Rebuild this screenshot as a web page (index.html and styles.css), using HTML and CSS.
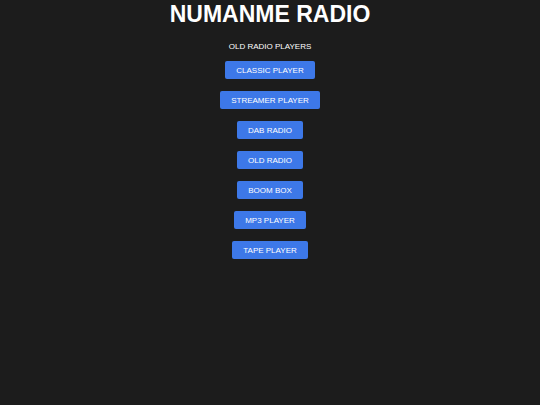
FILE: index.html
```html
<!DOCTYPE html>
<html lang="en">
<head>
  <meta charset="UTF-8">
  <meta name="viewport" content="width=device-width, initial-scale=1.0">
  <title>Numanme Radio</title>
  <link rel="stylesheet" href="styles.css">
</head>
<body>
  <h1 class="title">NUMANME RADIO</h1>
  <p class="subtitle">OLD RADIO PLAYERS</p>
  <div class="players">
    <button class="player">CLASSIC PLAYER</button>
    <button class="player">STREAMER PLAYER</button>
    <button class="player">DAB RADIO</button>
    <button class="player">OLD RADIO</button>
    <button class="player">BOOM BOX</button>
    <button class="player">MP3 PLAYER</button>
    <button class="player">TAPE PLAYER</button>
  </div>
</body>
</html>
```

FILE: styles.css
```css
body {
  font-family: "Liberation Sans", Arial, sans-serif;
  background-color: #1c1c1c;
  color: white;
  margin: 0;
  text-align: center;
}

.title {
  font-size: 23px;
  font-weight: bold;
  margin: 0;
  padding-top: 1px;
  line-height: 26px;
}

.subtitle {
  font-size: 8px;
  margin: 15px 0 0;
  line-height: 10px;
}

.players {
  display: flex;
  flex-direction: column;
  align-items: center;
  gap: 12px;
  margin-top: 9px;
}

.player {
  font-family: "Liberation Sans", Arial, sans-serif;
  background: #3d78e8;
  color: white;
  border: none;
  border-radius: 2px;
  height: 18px;
  padding: 0 11px;
  font-size: 8px;
  cursor: pointer;
}

.player:hover {
  background: #2f62c4;
}
```
